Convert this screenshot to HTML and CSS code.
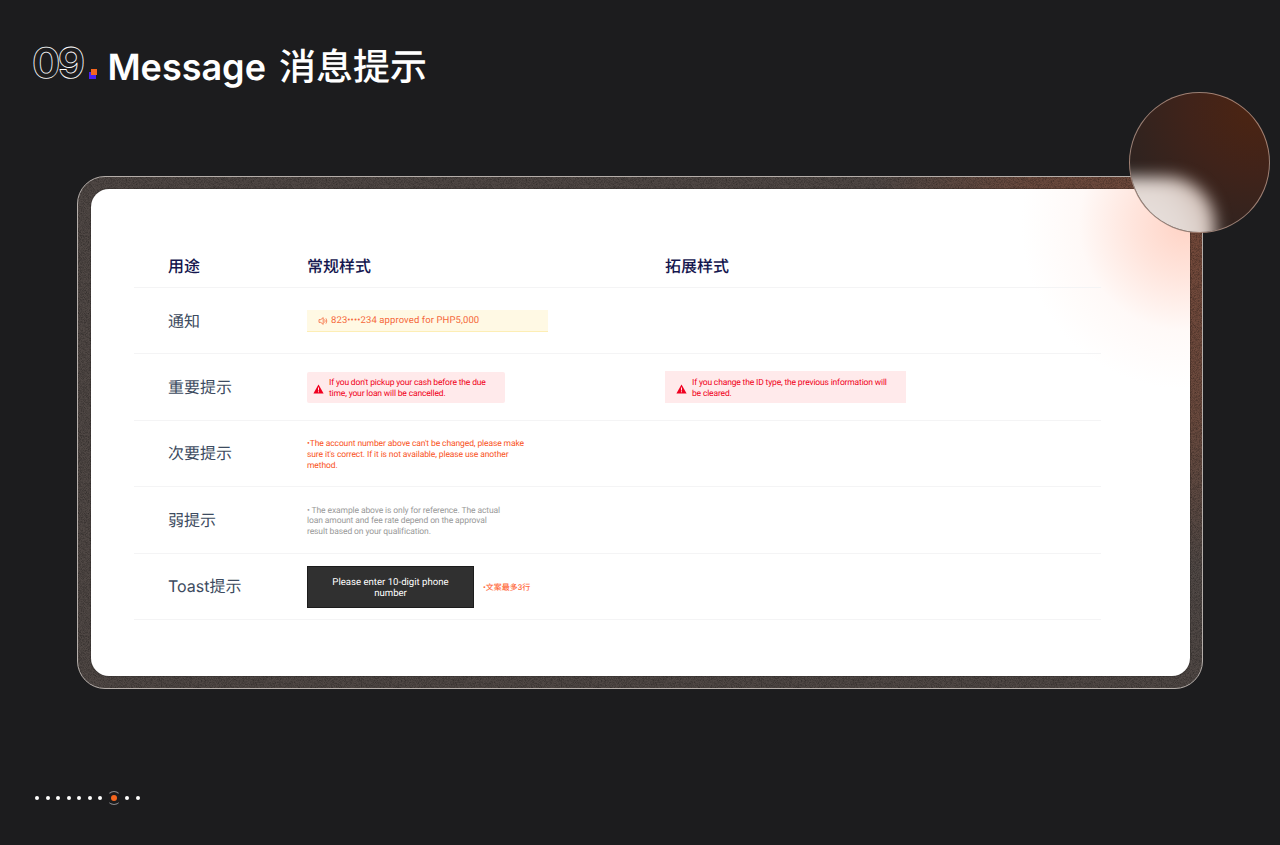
FILE: index.html
```html
<!DOCTYPE html>
<html lang="zh">
<head>
  <meta charset="UTF-8" />
  <meta name="viewport" content="width=device-width, initial-scale=1.0" />
  <title>Message 消息提示</title>
  <link rel="stylesheet" href="styles.css">
</head>
<body>
  <!-- Título -->
  <header class="page-title">
    <span class="title-num">09</span>
    <span class="title-dot"></span>
    <h1>Message <span class="title-cn">消息提示</span></h1>
  </header>

  <!-- Moldura + tabela -->
  <main class="frame">
    <div class="card">
      <div class="row row-head">
        <div class="col-label">用途</div>
        <div>常规样式</div>
        <div>拓展样式</div>
      </div>

      <div class="row">
        <div class="col-label">通知</div>
        <div class="notice">
          <svg class="icon-speaker" viewBox="0 0 10 10" fill="none" stroke="currentColor" stroke-width="0.8">
            <path d="M1 3.6h1.8L5.2 1.6v6.8L2.8 6.4H1z" />
            <path d="M6.6 3.4c.6.9.6 2.3 0 3.2" />
            <path d="M7.9 2.4c1.1 1.5 1.1 3.7 0 5.2" />
          </svg>
          <span>823••••234 approved for PHP5,000</span>
        </div>
        <div></div>
      </div>

      <div class="row">
        <div class="col-label">重要提示</div>
        <div class="alert alert-short">
          <svg class="icon-warn" viewBox="0 0 12 11">
            <path d="M6 .6 11.6 10.4H.4z" fill="#f00020" />
            <path d="M6 3.8v3.4M6 8v1.1" stroke="#fff" stroke-width="1" />
          </svg>
          <span>If you don't pickup your cash before the due time, your loan will be cancelled.</span>
        </div>
        <div class="alert alert-wide">
          <svg class="icon-warn" viewBox="0 0 12 11">
            <path d="M6 .6 11.6 10.4H.4z" fill="#f00020" />
            <path d="M6 3.8v3.4M6 8v1.1" stroke="#fff" stroke-width="1" />
          </svg>
          <span>If you change the ID type, the previous information will be cleared.</span>
        </div>
      </div>

      <div class="row">
        <div class="col-label">次要提示</div>
        <p class="hint hint-orange">•The account number above can't be changed, please make sure it's correct. If it is not available, please use another method.</p>
        <div></div>
      </div>

      <div class="row">
        <div class="col-label">弱提示</div>
        <p class="hint hint-gray">• The example above is only for reference. The actual loan amount and fee rate depend on the approval result based on your qualification.</p>
        <div></div>
      </div>

      <div class="row">
        <div class="col-label">Toast提示</div>
        <div class="toast-wrap">
          <div class="toast">Please enter 10-digit phone number</div>
          <span class="toast-note">•文案最多3行</span>
        </div>
        <div></div>
      </div>
    </div>

    <!-- Círculo de vidro no canto -->
    <div class="glass">
      <div class="glass-light"></div>
    </div>
  </main>

  <!-- Paginação -->
  <nav class="pager">
    <span class="dot"></span>
    <span class="dot"></span>
    <span class="dot"></span>
    <span class="dot"></span>
    <span class="dot"></span>
    <span class="dot"></span>
    <span class="dot"></span>
    <span class="dot-active"></span>
    <span class="dot"></span>
    <span class="dot"></span>
  </nav>
</body>
</html>
```

FILE: styles.css
```css
/* Geral */
body {
  margin: 0;
  height: 845px;
  overflow: hidden;
  background: #1c1c1e;
  font-family: Inter, "Noto Sans CJK SC", sans-serif;
  text-rendering: geometricPrecision;
}

/* Título */
.page-title {
  display: flex;
  align-items: flex-start;
  height: 176px;
  padding-left: 32px;
  box-sizing: border-box;
}

.title-num {
  margin-top: 37px;
  font-size: 42px;
  line-height: 54px;
  font-weight: 700;
  letter-spacing: -2.6px;
  color: #1c1c1e;
  -webkit-text-stroke: 0.8px #fff;
}

.title-dot {
  position: relative;
  width: 7px;
  height: 7px;
  margin: 72px 0 0 7px;
  background: #4a22f0;
}

.title-dot::after {
  content: "";
  position: absolute;
  left: 2px;
  top: -3px;
  width: 6px;
  height: 6px;
  background: #f5651e;
}

h1 {
  margin: 42px 0 0 11px;
  font-size: 36px;
  line-height: 50px;
  font-weight: 600;
  color: #fff;
}

.title-cn {
  margin-left: 4px;
  font-size: 37px;
  font-weight: 500;
}

/* Moldura */
.frame {
  position: relative;
  width: 1126px;
  height: 513px;
  margin-left: 77px;
  padding: 12px 12px 12px 13px;
  box-sizing: border-box;
  border: 1px solid #b5aeaa;
  border-radius: 28px;
  background:
    url("data:image/svg+xml,%3Csvg xmlns='http://www.w3.org/2000/svg' width='200' height='200'%3E%3Cfilter id='n'%3E%3CfeTurbulence type='fractalNoise' baseFrequency='1.4' numOctaves='2'/%3E%3CfeColorMatrix values='0 0 0 0 0 0 0 0 0 0 0 0 0 0 0 0 0 0 0.7 -0.25'/%3E%3C/filter%3E%3Crect width='200' height='200' filter='url(%23n)'/%3E%3C/svg%3E"),
    radial-gradient(circle 330px at 100% 12%, #74493a 0%, #6a4a3e 55%, rgba(80, 72, 70, 0) 100%),
    #504845;
}

.card {
  height: 487px;
  padding: 50px 89px 0 43px;
  box-sizing: border-box;
  border-radius: 18px;
  box-shadow: 0 0 0 1px rgba(20, 18, 18, 0.2);
  background:
    radial-gradient(circle 165px at 1095px 35px, #ffd3c5 0%, rgba(255, 220, 209, 0.75) 32%, rgba(255, 236, 230, 0.3) 65%, rgba(255, 255, 255, 0) 100%),
    #fff;
}

/* Tabela */
.row {
  display: grid;
  grid-template-columns: 173px 358px 1fr;
  align-items: center;
  height: 66.4px;
  box-sizing: border-box;
  border-bottom: 1px solid #f4f4f5;
}

.row-head {
  height: 49px;
  padding-top: 4px;
  font-size: 16px;
  font-weight: 500;
  color: #14164e;
}

.col-label {
  padding-left: 34px;
  padding-bottom: 2px;
  font-size: 16px;
  color: #3d4b60;
}

.row-head .col-label {
  padding-bottom: 0;
  color: #14164e;
}

/* Notificação */
.notice {
  display: flex;
  align-items: center;
  gap: 3px;
  width: 241px;
  height: 22px;
  padding: 1px 0 0 11px;
  box-sizing: border-box;
  border-bottom: 1px solid #fdeeb5;
  background: #fff9e4;
  color: #f5683a;
  font-family: Roboto, sans-serif;
  font-size: 9.5px;
  letter-spacing: 0.1px;
}

.icon-speaker {
  width: 10px;
  height: 10px;
}

/* Alertas */
.alert {
  display: flex;
  align-items: center;
  gap: 5px;
  height: 31px;
  padding-top: 3px;
  padding-left: 6px;
  box-sizing: border-box;
  border-radius: 2px;
  background: #ffeaeb;
  color: #f00020;
  font-family: Roboto, sans-serif;
  font-size: 8.5px;
  letter-spacing: -0.16px;
  line-height: 11px;
}

.alert-short {
  width: 198px;
  padding-right: 14px;
}

.alert-wide {
  width: 241px;
  height: 32px;
  padding-left: 11px;
  padding-right: 16px;
  border-radius: 0;
}

.icon-warn {
  flex: none;
  width: 11px;
  height: 10px;
}

/* Textos de dica */
.hint {
  margin: 4px 0 0;
  font-family: Roboto, sans-serif;
  font-size: 8.5px;
  line-height: 10.8px;
  letter-spacing: -0.11px;
}

.hint-orange {
  width: 222px;
  color: #f9531d;
}

.hint-gray {
  width: 195px;
  color: #999;
}

/* Toast */
.toast-wrap {
  display: flex;
  align-items: center;
  gap: 9px;
  margin-top: 2px;
}

.toast {
  display: flex;
  align-items: center;
  justify-content: center;
  width: 167px;
  height: 42px;
  padding: 1px 20px 0;
  box-sizing: border-box;
  border: 1px solid #1c1c1c;
  background: #303030;
  color: #fff;
  font-family: Roboto, sans-serif;
  font-size: 9.6px;
  line-height: 11px;
  text-align: center;
}

.toast-note {
  color: #ff6a3c;
  font-family: Roboto, "Noto Sans CJK SC", sans-serif;
  font-size: 8px;
  font-weight: 500;
}

/* Círculo */
.glass {
  position: absolute;
  left: 1051px;
  top: -85px;
  width: 141px;
  height: 141px;
  overflow: hidden;
  box-sizing: border-box;
  border: 1px solid rgba(225, 190, 175, 0.6);
  border-radius: 50%;
  background: radial-gradient(circle 150px at 90% 10%, #4c2412 0%, #40231a 45%, #2b2321 100%);
}

.glass-light {
  position: absolute;
  left: -30px;
  top: 84px;
  width: 115px;
  height: 90px;
  border-radius: 0 48px 0 0;
  background: radial-gradient(circle 90px at 30% 70%, #ebe4e1 0%, #e2d8d3 60%, #cdb9b0 100%);
  filter: blur(8px);
}

/* Paginação */
.pager {
  display: flex;
  align-items: center;
  gap: 6.5px;
  height: 14px;
  margin: 101.5px 0 0 35px;
}

.dot {
  width: 4px;
  height: 4px;
  border-radius: 50%;
  background: #fff;
}

.dot-active {
  position: relative;
  width: 6px;
  height: 6px;
  margin: 0 2px;
  border-radius: 50%;
  background: #f5651e;
}

.dot-active::before {
  content: "";
  position: absolute;
  inset: -4px;
  border: 1.5px solid #8a898c;
  border-left-color: transparent;
  border-right-color: transparent;
  border-radius: 50%;
}
```
